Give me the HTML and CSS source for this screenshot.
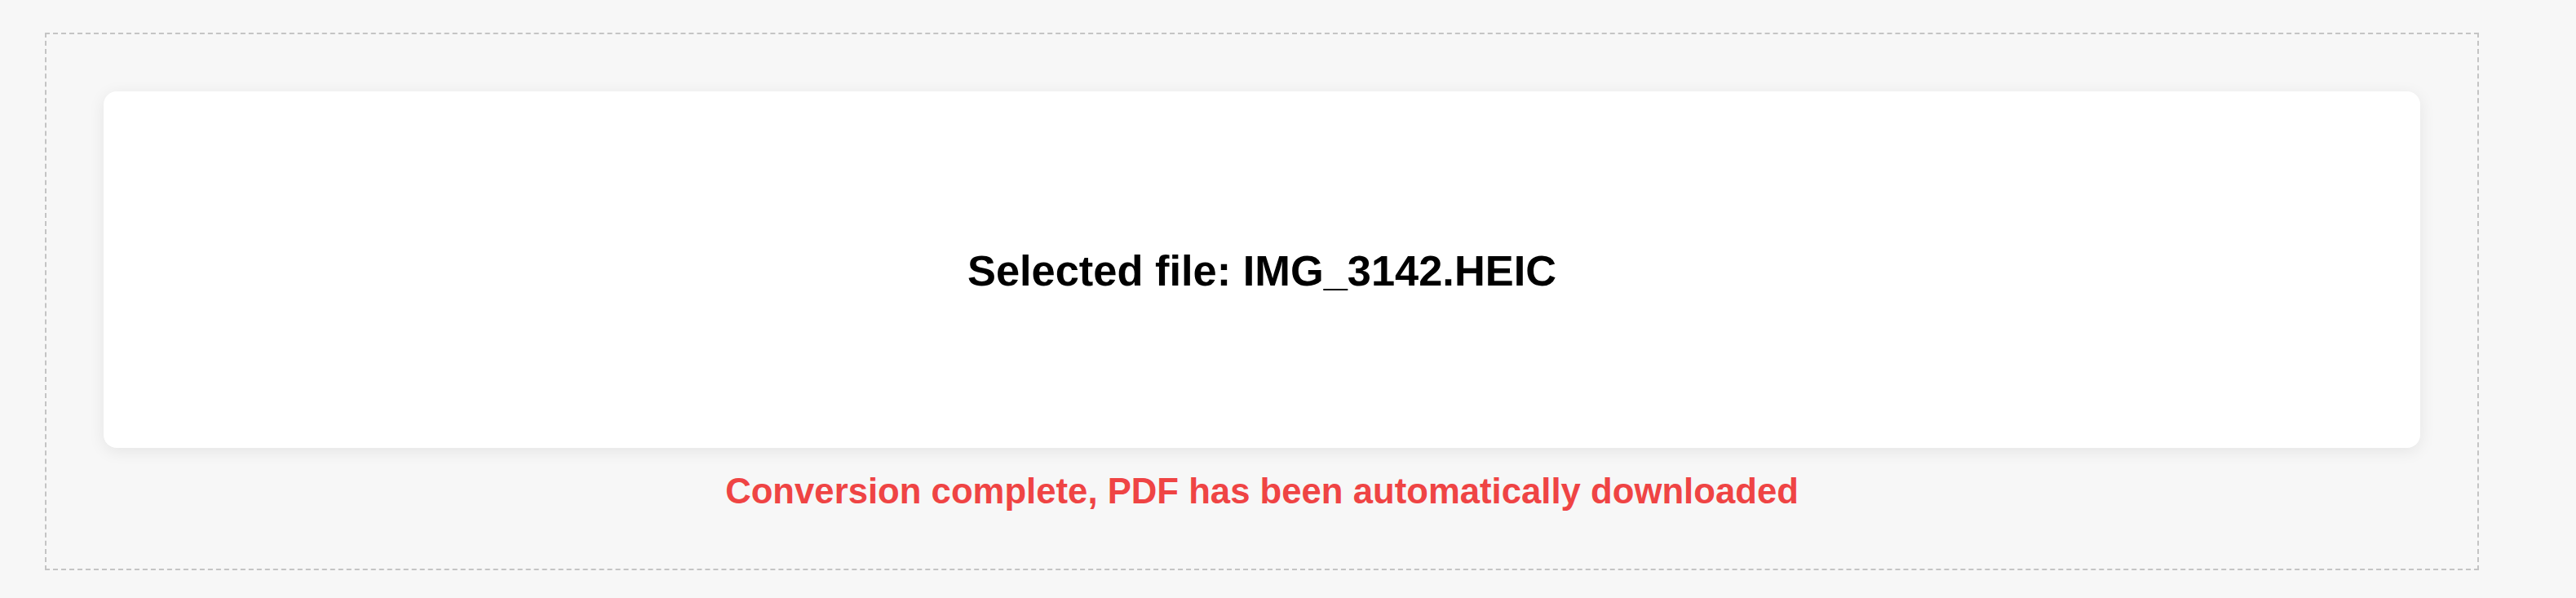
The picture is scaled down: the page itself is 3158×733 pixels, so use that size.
FILE: index.html
```html
<!DOCTYPE html>
<html>
	<head>
		<meta charset="utf-8">
		<title>HEIC to PDF</title>
		<link rel="stylesheet" href="styles.css">
	</head>
	<body>
		<div class="dropzone">
			<div class="file-card">
				<p class="file-name">Selected file: IMG_3142.HEIC</p>
			</div>
			<p class="status">Conversion complete, PDF has been automatically downloaded</p>
		</div>
	</body>
</html>
```

FILE: styles.css
```css
html, body {
	margin: 0;
	background: #f7f7f7;
}

body {
	padding: 40px 0 0 55px;
	font-family: "Liberation Sans", Arial, sans-serif;
}

.dropzone {
	width: 2984px;
	box-sizing: border-box;
	border: 2px dashed #c4c4c4;
	padding: 70px;
}

.file-card {
	height: 437px;
	display: flex;
	align-items: center;
	justify-content: center;
	background: #ffffff;
	border-radius: 16px;
	box-shadow: 0 4px 20px rgba(0, 0, 0, 0.08);
}

.file-name {
	margin: 2px 0 0;
	font-size: 52.4px;
	font-weight: bold;
	color: #000000;
}

.status {
	margin: 28px 0 0;
	text-align: center;
	font-size: 43.7px;
	font-weight: bold;
	color: #ef4444;
}
```
